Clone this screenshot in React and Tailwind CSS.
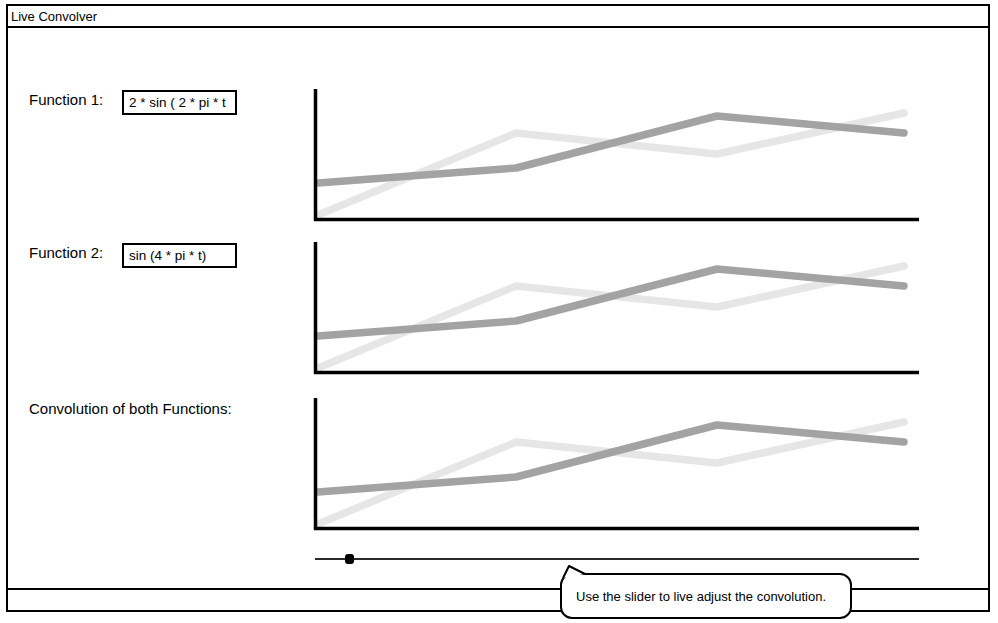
import React from "react";

const LIGHT = "5,127 203,45 404,66 591,25";
const DARK = "5,95 203,80 404,28 591,45";

function Chart() {
  return (
    <svg width="606" height="134" viewBox="0 0 606 134" className="block shrink-0">
      <polyline points={LIGHT} fill="none" stroke="#e6e6e6" strokeWidth="7.5" strokeLinecap="round" strokeLinejoin="round" />
      <polyline points={DARK} fill="none" stroke="#a3a3a3" strokeWidth="7.5" strokeLinecap="round" strokeLinejoin="round" />
      <line x1="2.5" y1="1" x2="2.5" y2="133" stroke="#000" strokeWidth="3.5" />
      <line x1="1" y1="131.5" x2="606" y2="131.5" stroke="#000" strokeWidth="3.5" />
    </svg>
  );
}

function Row({ label, input, className }) {
  return (
    <div className={"flex " + className}>
      <div className="w-[305px] shrink-0 pl-[21px] pt-[2px] flex items-start">
        <span className="w-[93px] shrink-0 text-[15px] leading-[20px] text-black">{label}</span>
        {input && (
          <div className="w-[115px] h-[25px] border-2 border-black flex items-center pl-[5px] text-[13.5px] leading-none text-black whitespace-nowrap">
            {input}
          </div>
        )}
      </div>
      <Chart />
    </div>
  );
}

export default function App() {
  return (
    <div
      className="relative w-[998px] h-[623px] bg-white overflow-hidden text-black"
      style={{ fontFamily: '"Liberation Sans", Arial, sans-serif' }}
    >
      <div className="absolute left-[6px] top-[4px] w-[984px] h-[608px] border-2 border-black flex flex-col">
        <div className="h-[22px] border-b-2 border-black pl-[3px] flex items-center text-[13px] leading-none">
          Live Convolver
        </div>
        <div className="h-[560px] pt-[60px] flex flex-col">
          <Row label="Function 1:" input="2 * sin ( 2 * pi * t" className="" />
          <Row label="Function 2:" input="sin (4 * pi * t)" className="mt-[19px]" />
          <Row label={<span className="whitespace-nowrap">Convolution of both Functions:</span>} className="mt-[22px]" />
          <div className="ml-[307px] mt-[23px] w-[604px] h-[10px] relative">
            <div className="absolute left-0 right-0 top-[4px] h-[2px] bg-[#2a2a2a]" />
            <div className="absolute left-[30px] top-0 w-[9px] h-[10px] rounded-[3px] bg-black" />
          </div>
        </div>
        <div className="h-[22px] border-t-2 border-black" />
      </div>

      <div className="absolute left-[560px] top-[573px] w-[292px] h-[46px] rounded-[12px] border-2 border-black bg-white flex items-center pl-[14px] text-[13px] leading-none whitespace-nowrap">
        Use the slider to live adjust the convolution.
      </div>
      <svg className="absolute left-[558px] top-[562px]" width="30" height="20" viewBox="0 0 30 20">
        <path d="M5 16 L11 4 L27 12" fill="#fff" stroke="#000" strokeWidth="2" strokeLinejoin="round" />
      </svg>
    </div>
  );
}
